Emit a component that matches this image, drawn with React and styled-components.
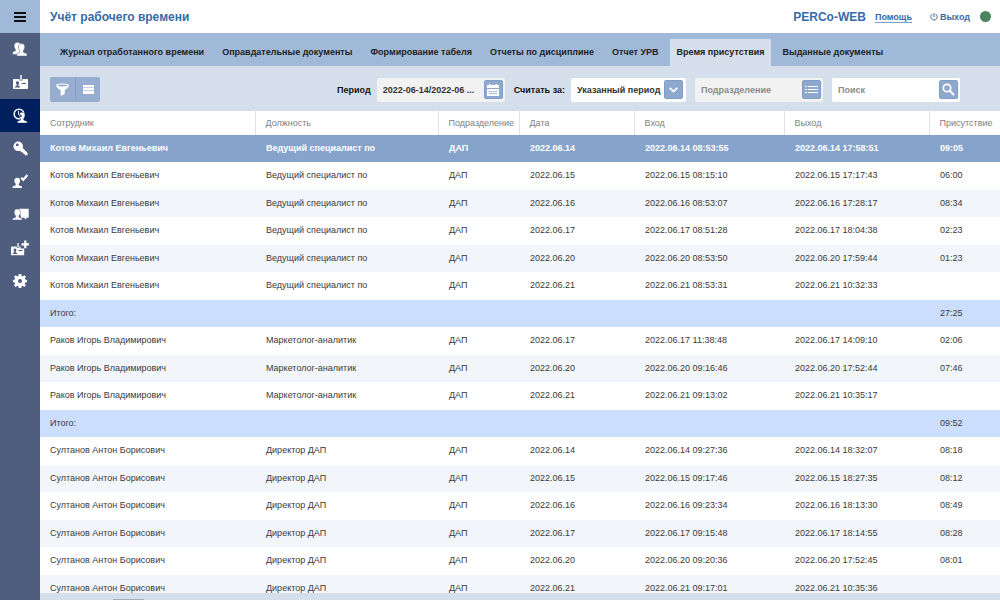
import React from 'react';
import styled, { createGlobalStyle } from 'styled-components';

const GlobalStyle = createGlobalStyle`
  * {
    box-sizing: border-box;
  }

  body {
    margin: 0;
    font-family: "Liberation Sans", Arial, sans-serif;
    font-size: 9px;
    color: #333;
    background: #fff;
  }

  button,
  input,
  select {
    font-family: inherit;
  }
`;

const Page = styled.div`
  display: flex;
  height: 100vh;
  overflow: hidden;
`;

const Sidebar = styled.nav`
  display: flex;
  flex-direction: column;
  flex: 0 0 40px;
  background: #4f5d7f;
`;

const SideButton = styled.button`
  display: flex;
  align-items: center;
  justify-content: center;
  height: 33px;
  padding: 0;
  border: 0;
  color: ${props => (props.$menu ? '#111' : '#fff')};
  background: ${props => (props.$menu ? '#a1b9d9' : props.$active ? '#001f5e' : 'transparent')};
  cursor: pointer;
`;

const Main = styled.main`
  display: flex;
  flex-direction: column;
  flex: 1;
  min-width: 0;
`;

const Header = styled.header`
  display: flex;
  align-items: center;
  flex: 0 0 33px;
  padding: 0 9px 0 10px;
`;

const Title = styled.h1`
  flex: 1;
  margin: 0;
  font-size: 12px;
  line-height: 16px;
  font-weight: bold;
  color: #396ba8;
`;

const Brand = styled.span`
  margin-right: 9px;
  font-size: 12px;
  line-height: 16px;
  font-weight: bold;
  color: #396ba8;
`;

const HelpLink = styled.a`
  margin-right: 18px;
  padding-top: 2px;
  font-weight: bold;
  line-height: 10px;
  color: #396ba8;
  text-decoration: none;
  border-bottom: 1px solid #7d9dcb;
`;

const ExitButton = styled.button`
  display: flex;
  align-items: center;
  gap: 2px;
  margin-right: 10px;
  padding: 0;
  border: 0;
  background: none;
  font-size: 9px;
  font-weight: bold;
  color: #396ba8;
  cursor: pointer;
`;

const Status = styled.span`
  width: 11px;
  height: 11px;
  border-radius: 50%;
  background: #4b865f;
`;

const Tabs = styled.div`
  display: flex;
  align-items: flex-end;
  gap: 4px;
  flex: 0 0 33px;
  padding-left: 13px;
  background: #a1b9d9;
`;

const Tab = styled.button`
  height: 27px;
  padding: 0 7px 2px;
  border: 0;
  font-size: 9px;
  font-weight: bold;
  color: #222;
  white-space: nowrap;
  background: ${props => (props.$active ? '#d5dfeb' : 'transparent')};
  cursor: pointer;
`;

const Toolbar = styled.div`
  display: flex;
  align-items: center;
  flex: 0 0 45px;
  padding: 2px 40px 0 10px;
  background: #d5dfeb;
`;

const ButtonGroup = styled.div`
  display: flex;
  margin-right: auto;
  border-radius: 2px;
  overflow: hidden;
`;

const GroupButton = styled.button`
  display: flex;
  align-items: center;
  justify-content: center;
  width: 25px;
  height: 25px;
  padding: 0;
  border: 0;
  color: #fff;
  background: #96adcf;
  cursor: pointer;

  & + & {
    border-left: 1px solid #84a0ca;
  }
`;

const Label = styled.label`
  margin-right: 6px;
  font-size: 9px;
  font-weight: bold;
  color: #111;
`;

const Field = styled.div`
  display: flex;
  align-items: center;
  width: ${props => props.$width || 128}px;
  height: 24px;
  margin-right: ${props => props.$gap || 0}px;
  padding: 0 2px 0 6px;
  border-radius: 2px;
  background: ${props => (props.$muted ? '#f2f2f2' : '#fff')};
`;

const Input = styled.input`
  flex: 1;
  min-width: 0;
  height: 20px;
  padding: 0;
  border: 0;
  outline: 0;
  background: none;
  font-size: 9px;
  font-weight: bold;
  color: #333;

  &::placeholder {
    color: #8b8b8b;
    opacity: 1;
  }
`;

const Select = styled.select`
  flex: 1;
  min-width: 0;
  height: 20px;
  padding: 0;
  border: 0;
  outline: 0;
  appearance: none;
  background: none;
  font-size: 9px;
  font-weight: bold;
  color: #333;
`;

const FieldButton = styled.button`
  display: flex;
  align-items: center;
  justify-content: center;
  flex: 0 0 19px;
  height: 19px;
  padding: 0;
  border: 1px solid #7f9dc9;
  border-radius: 2px;
  color: #fff;
  background: #8fa8cd;
  cursor: pointer;
`;

const SelectArrow = styled(FieldButton).attrs({ as: 'span' })`
  margin-right: 1px;
  pointer-events: none;
`;

const TableArea = styled.div`
  flex: 1;
  min-height: 0;
  overflow: hidden;
`;

const Table = styled.table`
  width: 100%;
  table-layout: fixed;
  border-collapse: collapse;
`;

const Col = styled.col`
  width: ${props => (props.$width ? `${props.$width}px` : 'auto')};
`;

const HeadCell = styled.th`
  height: 24px;
  padding: 0 0 0 10px;
  border-right: 1px solid #e2e2e2;
  font-weight: normal;
  text-align: left;
  color: #808080;
  white-space: nowrap;

  &:last-child {
    border-right: 0;
  }
`;

const rowBackground = props => {
  if (props.$kind === 'selected') return '#86a3cb';
  if (props.$kind === 'total') return '#cbdefd';
  return props.$striped ? '#f2f5fa' : '#fff';
};

const Row = styled.tr`
  height: 27px;
  background: ${rowBackground};
  color: ${props => (props.$kind === 'selected' ? '#fff' : '#3a3a3a')};
  font-weight: ${props => (props.$kind === 'selected' ? 'bold' : 'normal')};

  &:nth-child(even) {
    height: 28px;
  }
`;

const Cell = styled.td`
  padding: 0 0 2px 11px;
  white-space: nowrap;

  &:first-child {
    padding-left: 10px;
  }
`;

const ScrollTrack = styled.div`
  flex: 0 0 7px;
  padding: 6px 0 0 73px;
  background: #d5dfeb;
`;

const ScrollThumb = styled.div`
  width: 31px;
  height: 1px;
  background: #a5adb6;
`;

const PersonIcon = () => (
  <svg width="16" height="15" viewBox="0 0 16 15" fill="currentColor">
    <path d="M5.500.5C3.200.5 2.200 2.200 2.400 4.300c.1 1.500.7 2.400 1.300 3.100v1.300L.8 10.300v2h4.900l3-3V3C8.400 1.300 7.400.5 5.500.5z" />
    <path d="M9.500 1.500c2.400 0 3.400 1.500 3.200 3.800-.1 1.500-.7 2.500-1.400 3.300v1.600l3.700 1.600V14H4.800v-2.200L7.800 10.200V8.600C7.100 7.800 6.600 6.800 6.500 5.300 6.300 3 7.200 1.500 9.500 1.500z" stroke="#4f5d7f" strokeWidth=".5" />
  </svg>
);

const BadgeShape = () => (
  <>
    <path fillRule="evenodd" d="M1 4h5.500v1.500h3V4H14c.6 0 1 .4 1 1v8c0 .6-.4 1-1 1H1c-.6 0-1-.4-1-1V5c0-.6.4-1 1-1zm1 8.500h5v-1L5.400 10.700V9.600C6.800 7.800 6 6.300 4.500 6.300S2.200 7.800 3.600 9.600v1.100L2 11.500zM8.500 8v1H13V8z" />
    <path d="M7 0h2v4.800H7z" opacity=".75" />
  </>
);

const BadgeIcon = () => (
  <svg width="15" height="15" viewBox="0 0 15 15" fill="currentColor">
    <BadgeShape />
  </svg>
);

const TimeIcon = () => (
  <svg width="15" height="16" viewBox="0 0 15 16" fill="currentColor">
    <circle cx="6" cy="6" r="4.800" fill="none" stroke="currentColor" strokeWidth="1.600" />
    <path d="M9 4.200c2.100 0 3.100 1.400 2.900 3.500-.1 1.300-.6 2.200-1.200 2.900v1.400l3.500 1.400V15H4.300v-1.600l3.200-1.400v-1.400c-.7-.7-1.100-1.600-1.200-2.900C6.100 5.600 7 4.200 9 4.200z" stroke="#001f5e" strokeWidth=".4" />
    <path d="M5.500 3v3.500l3 2" fill="none" stroke="#001f5e" strokeWidth="2" />
    <path d="M5.500 3v3.500l2 1.500" fill="none" stroke="currentColor" strokeWidth="1" />
  </svg>
);

const KeyIcon = () => (
  <svg width="15" height="15" viewBox="0 0 15 15" fill="currentColor">
    <path fillRule="evenodd" d="M5.200.5a4.800 4.800 0 1 1 0 9.600 4.800 4.800 0 0 1 0-9.600zM4.300 2.500a1.400 1.400 0 1 0 0 2.800 1.400 1.400 0 0 0 0-2.800z" />
    <path d="m8.500 5.800 6 5.900v2.600h-2.700v-1.400h-1.500v-1.500H8.800L6 8.700z" />
  </svg>
);

const VerifyIcon = () => (
  <svg width="16" height="15" viewBox="0 0 16 15" fill="currentColor">
    <path d="M5.200 3.800c2.200 0 3.100 1.300 2.900 3.200-.1 1.300-.6 2.200-1.300 2.800v1.400l3.200 1.200V14H.6v-1.600l3.100-1.200V9.800C3 9.200 2.500 8.300 2.400 7 2.200 5.100 3.100 3.800 5.200 3.800z" />
    <path d="m9.200 3.600 2 2.300 4.200-5" fill="none" stroke="currentColor" strokeWidth="2.200" />
  </svg>
);

const MessageIcon = () => (
  <svg width="17" height="13" viewBox="0 0 17 13" fill="currentColor">
    <path d="M7 .8h9.700v8.900h-2.500v2l-2.200-2H9z" />
    <path d="M5.200 1c2.500 0 3.400 1.500 3.200 3.700C8.300 6 7.700 7 7 7.700v1.500l3.200 1.200V12H.4v-1.600l3.200-1.200V7.700C2.900 7 2.300 6 2.200 4.700 2 2.500 2.900 1 5.200 1z" stroke="#4f5d7f" strokeWidth=".5" />
  </svg>
);

const AddBadgeIcon = () => (
  <svg width="18" height="16" viewBox="0 0 18 16" fill="currentColor">
    <g transform="translate(0 3) scale(.88)">
      <BadgeShape />
    </g>
    <path d="M9.500 2.500H18v6H9.500z" fill="#4f5d7f" />
    <path d="M13.200.5h2.200v2.700H18v2.200h-2.600v2.800h-2.200V5.400h-2.700V3.200h2.700z" />
  </svg>
);

const GearIcon = () => (
  <svg width="14" height="14" viewBox="0 0 14 14" fill="currentColor">
    <path fillRule="evenodd" d="M5.700 0h2.600l.4 2 1 .4 1.700-1.200 1.600 1.700-1.200 1.600.5 1.100 1.700.3v2.400l-1.800.3-.5 1.100 1.200 1.700-1.700 1.600-1.600-1.200-1 .5-.3 1.700H5.700l-.4-1.800-1-.4L2.700 13 1 11.300l1.200-1.700-.5-1-1.700-.3V5.900l1.800-.3.400-1.100L1 2.900l1.800-1.700 1.600 1.200 1-.4zM7 4.900a2.100 2.100 0 1 0 0 4.200 2.100 2.100 0 0 0 0-4.200z" />
  </svg>
);

const MenuIcon = () => (
  <svg width="12" height="10" viewBox="0 0 12 10" fill="currentColor">
    <path d="M0 0h12v2H0zM0 4h12v2H0zM0 8h12v2H0z" />
  </svg>
);

const FilterIcon = () => (
  <svg width="13" height="13" viewBox="0 0 13 13">
    <path d="M0 2.500C0 1.200 3 .5 6.500.5s6.500.7 6.500 2c0 1-1.500 2.500-4.300 5V11l-4 2V7.500C1.500 5 0 3.500 0 2.500z" fill="currentColor" />
    <ellipse cx="6.500" cy="2.500" rx="4.800" ry=".9" fill="#96adcf" />
  </svg>
);

const RowsIcon = () => (
  <svg width="11" height="9" viewBox="0 0 11 9">
    <path d="M0 0h11v9H0z" fill="currentColor" />
    <path d="M0 2.500h11M0 5.500h11" stroke="#c5d2e5" />
  </svg>
);

const CalendarIcon = () => (
  <svg width="12" height="12" viewBox="0 0 12 12">
    <path d="M0 1h2V0h1.500v1h5V0H10v1h2v3H0zM0 5h12v7H0z" fill="currentColor" />
    <path d="M2 7.500h8M2 9.500h8" stroke="#8fa8cd" strokeDasharray="1.500 .6" />
  </svg>
);

const ChevronIcon = () => (
  <svg width="9" height="6" viewBox="0 0 9 6" fill="none" stroke="currentColor" strokeWidth="1.800">
    <path d="M.7.8 4.500 4.500 8.300.8" />
  </svg>
);

const ListIcon = () => (
  <svg width="13" height="9" viewBox="0 0 13 9" stroke="currentColor">
    <path d="M0 1.500h2M3 1.500h10M0 4.500h2M3 4.500h10M0 7.500h2M3 7.500h10" />
  </svg>
);

const SearchIcon = () => (
  <svg width="13" height="13" viewBox="0 0 13 13" fill="none" stroke="currentColor">
    <circle cx="5" cy="5" r="3.700" strokeWidth="1.700" />
    <path d="m7.800 7.800 4.200 4.200" strokeWidth="2.200" />
  </svg>
);

const PowerIcon = () => (
  <svg width="8" height="8" viewBox="0 0 8 8" fill="none" stroke="currentColor">
    <path d="M2.200 1.200a3.200 3.200 0 1 0 3.600 0M4 0v4" />
  </svg>
);

const sections = [
  { label: 'Персонал', icon: PersonIcon },
  { label: 'Бюро пропусков', icon: BadgeIcon },
  { label: 'Учёт рабочего времени', icon: TimeIcon, active: true },
  { label: 'Контроль доступа', icon: KeyIcon },
  { label: 'Верификация', icon: VerifyIcon },
  { label: 'Мониторинг', icon: MessageIcon },
  { label: 'Заказ пропуска', icon: AddBadgeIcon },
  { label: 'Администрирование', icon: GearIcon },
];

const tabs = [
  'Журнал отработанного времени',
  'Оправдательные документы',
  'Формирование табеля',
  'Отчеты по дисциплине',
  'Отчет УРВ',
  'Время присутствия',
  'Выданные документы',
];

const columns = [
  { title: 'Сотрудник', width: 215 },
  { title: 'Должность', width: 183 },
  { title: 'Подразделение', width: 81 },
  { title: 'Дата', width: 115 },
  { title: 'Вход', width: 150 },
  { title: 'Выход', width: 145 },
  { title: 'Присутствие' },
];

const employees = [
  {
    name: 'Котов Михаил Евгеньевич',
    position: 'Ведущий специалист по',
    total: '27:25',
    days: [
      ['2022.06.14', '08:53:55', '17:58:51', '09:05'],
      ['2022.06.15', '08:15:10', '17:17:43', '06:00'],
      ['2022.06.16', '08:53:07', '17:28:17', '08:34'],
      ['2022.06.17', '08:51:28', '18:04:38', '02:23'],
      ['2022.06.20', '08:53:50', '17:59:44', '01:23'],
      ['2022.06.21', '08:53:31', '10:32:33', ''],
    ],
  },
  {
    name: 'Раков Игорь Владимирович',
    position: 'Маркетолог-аналитик',
    total: '09:52',
    days: [
      ['2022.06.17', '11:38:48', '14:09:10', '02:06'],
      ['2022.06.20', '09:16:46', '17:52:44', '07:46'],
      ['2022.06.21', '09:13:02', '10:35:17', ''],
    ],
  },
  {
    name: 'Султанов Антон Борисович',
    position: 'Директор ДАП',
    days: [
      ['2022.06.14', '09:27:36', '18:32:07', '08:18'],
      ['2022.06.15', '09:17:46', '18:27:35', '08:12'],
      ['2022.06.16', '09:23:34', '18:13:30', '08:49'],
      ['2022.06.17', '09:15:48', '18:14:55', '08:28'],
      ['2022.06.20', '09:20:36', '17:52:45', '08:01'],
      ['2022.06.21', '09:17:01', '10:35:36', ''],
    ],
  },
];

const rows = employees.flatMap(({ name, position, total, days }) => {
  const list = days.map(([date, enter, exit, presence]) => ({
    cells: [name, position, 'ДАП', date, `${date} ${enter}`, `${date} ${exit}`, presence],
  }));
  if (total) {
    list.push({ kind: 'total', cells: ['Итого:', '', '', '', '', '', total] });
  }
  return list;
});
rows[0].kind = 'selected';

const App = () => (
  <Page>
    <GlobalStyle />
    <Sidebar>
      <SideButton $menu aria-label="Меню">
        <MenuIcon />
      </SideButton>
      {sections.map(({ label, icon: Icon, active }) => (
        <SideButton key={label} aria-label={label} $active={active}>
          <Icon />
        </SideButton>
      ))}
    </Sidebar>

    <Main>
      <Header>
        <Title>Учёт рабочего времени</Title>
        <Brand>PERCo-WEB</Brand>
        <HelpLink href="#help">Помощь</HelpLink>
        <ExitButton>
          <PowerIcon />
          Выход
        </ExitButton>
        <Status />
      </Header>

      <Tabs role="tablist">
        {tabs.map((tab, i) => (
          <Tab key={tab} role="tab" aria-selected={i === 5} $active={i === 5}>
            {tab}
          </Tab>
        ))}
      </Tabs>

      <Toolbar>
        <ButtonGroup>
          <GroupButton aria-label="Фильтр">
            <FilterIcon />
          </GroupButton>
          <GroupButton aria-label="Действия">
            <RowsIcon />
          </GroupButton>
        </ButtonGroup>

        <Label htmlFor="period">Период</Label>
        <Field $muted $gap={9}>
          <Input id="period" defaultValue="2022-06-14/2022-06 ..." />
          <FieldButton aria-label="Выбрать период">
            <CalendarIcon />
          </FieldButton>
        </Field>

        <Label htmlFor="mode">Считать за:</Label>
        <Field $width={115} $gap={9}>
          <Select id="mode">
            <option>Указанный период</option>
          </Select>
          <SelectArrow>
            <ChevronIcon />
          </SelectArrow>
        </Field>

        <Field $muted $gap={9}>
          <Input aria-label="Подразделение" placeholder="Подразделение" />
          <FieldButton aria-label="Выбрать подразделение">
            <ListIcon />
          </FieldButton>
        </Field>

        <Field>
          <Input aria-label="Поиск" placeholder="Поиск" />
          <FieldButton aria-label="Найти">
            <SearchIcon />
          </FieldButton>
        </Field>
      </Toolbar>

      <TableArea>
        <Table>
          <colgroup>
            {columns.map(({ title, width }) => (
              <Col key={title} $width={width} />
            ))}
          </colgroup>
          <thead>
            <tr>
              {columns.map(({ title }) => (
                <HeadCell key={title}>{title}</HeadCell>
              ))}
            </tr>
          </thead>
          <tbody>
            {rows.map(({ kind, cells }, i) => (
              <Row key={i} $kind={kind} $striped={i % 2 === 0}>
                {cells.map((cell, j) => (
                  <Cell key={j}>{cell}</Cell>
                ))}
              </Row>
            ))}
          </tbody>
        </Table>
      </TableArea>
      <ScrollTrack>
        <ScrollThumb />
      </ScrollTrack>
    </Main>
  </Page>
);

export default App;
